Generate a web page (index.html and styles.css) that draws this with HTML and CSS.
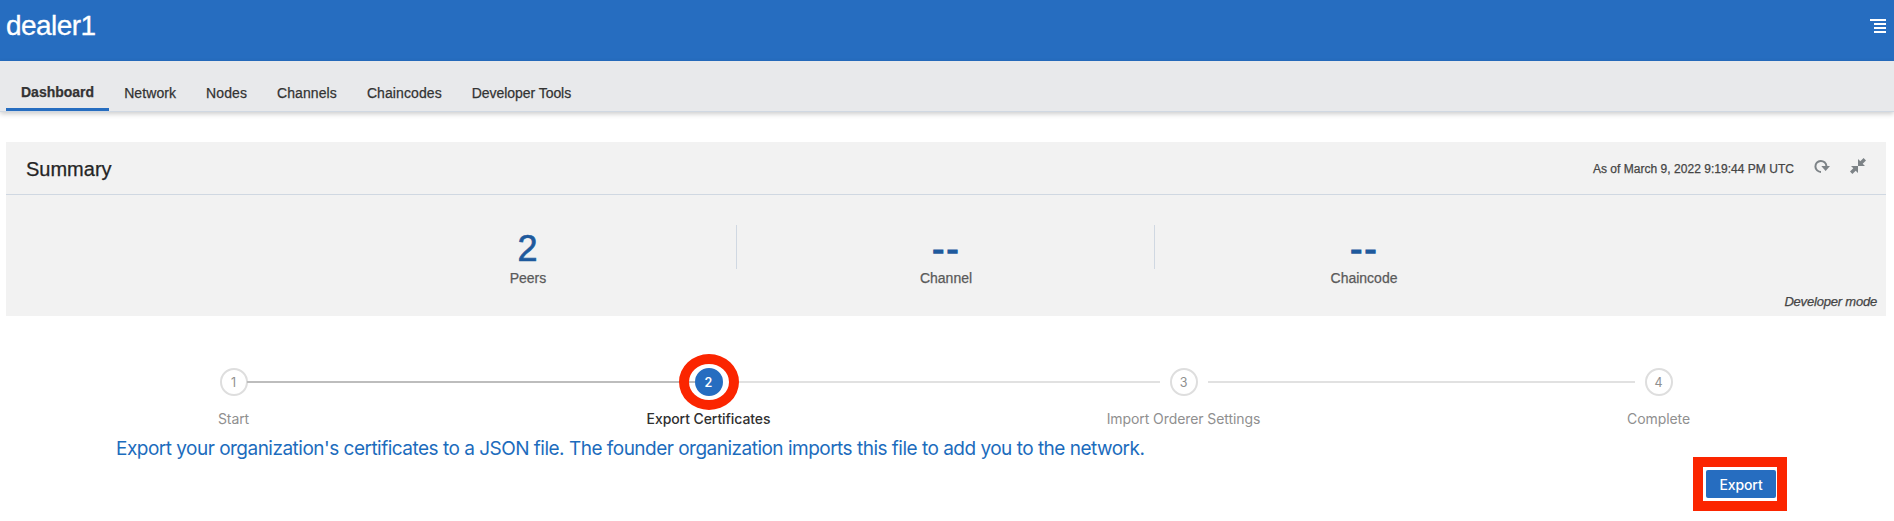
FILE: index.html
```html
<!DOCTYPE html>
<html lang="en">
<head>
<meta charset="utf-8">
<title>dealer1</title>
<link rel="stylesheet" href="styles.css">
</head>
<body>
<header class="header">
  <h1 class="brand">dealer1</h1>
  <svg class="menu-icon" width="16" height="14" viewBox="0 0 16 14"><path fill="#fff" d="M0 0h16v2H0zM4 4h12v2H4zM4 8h12v2H4zM4 12h12v2H4z"/></svg>
</header>
<nav class="tabs">
  <a class="tab active">Dashboard</a>
  <a class="tab">Network</a>
  <a class="tab">Nodes</a>
  <a class="tab">Channels</a>
  <a class="tab">Chaincodes</a>
  <a class="tab">Developer Tools</a>
</nav>
<main>
  <section class="panel">
    <div class="panel-head">
      <h2 class="panel-title">Summary</h2>
      <span class="asof">As of March 9, 2022 9:19:44 PM UTC</span>
      <svg class="refresh" width="16" height="16" viewBox="0 0 16 16"><path d="M7 12.9A5.5 5.5 0 1 1 12.4 7" fill="none" stroke="#7d8387" stroke-width="2"/><path d="M7.3 7h8.7l-4.4 5z" fill="#7d8387"/></svg>
      <svg class="collapse" width="16" height="16" viewBox="0 0 16 16"><path fill="#7d8387" d="M8 8V1l2.3 2.3L13.6 0 16 2.4l-3.3 3.3L15 8zM8 8v7l-2.3-2.3L2.4 16 0 13.6l3.3-3.3L1 8z"/></svg>
    </div>
    <div class="stats">
      <div class="stat"><div class="value">2</div><div class="label">Peers</div></div>
      <div class="stat"><div class="value dashes">--</div><div class="label">Channel</div></div>
      <div class="stat"><div class="value dashes">--</div><div class="label">Chaincode</div></div>
    </div>
    <div class="mode">Developer mode</div>
  </section>
  <div class="train">
    <div class="step"><span class="dot">1</span><span class="step-label">Start</span></div>
    <div class="step current"><span class="dot">2<i class="ring"></i></span><span class="step-label">Export Certificates</span></div>
    <div class="step"><span class="dot">3</span><span class="step-label">Import Orderer Settings</span></div>
    <div class="step"><span class="dot">4</span><span class="step-label">Complete</span></div>
  </div>
  <p class="hint">Export your organization's certificates to a JSON file. The founder organization imports this file to add you to the network.</p>
  <div class="actions"><div class="frame"><button class="export">Export</button></div></div>
</main>
</body>
</html>
```
FILE: styles.css
```css
* { box-sizing: border-box; }
body {
  margin: 0;
  height: 521px;
  overflow: hidden;
  background: #fff;
  color: #333;
  font: 14px "Liberation Sans", Arial, sans-serif;
}
h1, h2, p { margin: 0; font-weight: 400; }
svg { display: block; flex: none; }

.header {
  height: 61px;
  padding: 0 8px 0 6px;
  display: flex;
  justify-content: space-between;
  background: #266dc0;
}
.brand { color: #fff; font-size: 28px; line-height: 32px; padding-top: 10px; letter-spacing: -.55px; -webkit-text-stroke: .3px #fff; }
.menu-icon { margin-top: 19px; }

.tabs {
  height: 51px;
  padding-left: 6px;
  display: flex;
  background: #e8e9eb;
  border-bottom: 1px solid #d0d8e2;
  box-shadow: 0 2px 5px rgba(0, 0, 0, .2);
}
.tab { padding: 24px 15px 0; line-height: 16px; color: #333; letter-spacing: .09px; -webkit-text-stroke: .25px #333; }
.tab:last-child { letter-spacing: -.05px; }
.tab.active { padding-top: 23px; font-weight: 700; letter-spacing: 0; border-bottom: 3px solid #266dc0; }

.panel { margin: 30px 8px 0 6px; height: 174px; background: #f2f2f2; }
.panel-head {
  height: 53px;
  padding: 0 20px;
  display: flex;
  border-bottom: 1px solid #d0d8e2;
}
.panel-title { flex: 1; font-size: 20px; line-height: 24px; padding-top: 15px; color: #252525; -webkit-text-stroke: .25px #252525; }
.asof { font-size: 12px; line-height: 16px; padding-top: 19px; color: #454545; letter-spacing: .03px; -webkit-text-stroke: .25px #454545; }
.refresh { margin: 17px 0 0 20px; }
.collapse { margin: 16px 0 0 20px; }
.stats { height: 105px; display: flex; justify-content: center; }
.stat { width: 418px; padding-top: 34px; text-align: center; position: relative; }
.stat + .stat::before {
  content: "";
  position: absolute;
  left: -1px;
  top: 30px;
  height: 44px;
  border-left: 1px solid #d0d8e2;
}
.value { font-size: 36px; line-height: 40px; color: #1f5a9d; text-indent: -1px; -webkit-text-stroke: .7px #1f5a9d; }
.dashes { letter-spacing: 2.2px; text-indent: 1px; -webkit-text-stroke-width: 1.4px; }
.label { line-height: 16px; margin-top: 1px; color: #5a5a5a; -webkit-text-stroke: .25px #5a5a5a; }
.mode { margin-top: -6px; padding-right: 9px; text-align: right; font-size: 13px; line-height: 16px; font-style: italic; color: #454545; letter-spacing: -.2px; -webkit-text-stroke: .25px #454545; }

.train {
  display: flex;
  width: 1900px;
  margin: 52px 0 0 -4px;
  height: 64px;
  font-family: Inter, sans-serif;
  color: #8f8f8f;
}
.step { width: 475px; display: flex; flex-direction: column; align-items: center; position: relative; }
.dot {
  width: 28px;
  height: 28px;
  border: 2px solid #dedede;
  border-radius: 50%;
  font-size: 12.5px;
  line-height: 25px;
  text-align: center;
  background: #fff;
  position: relative;
}
.step + .step::before {
  content: "";
  position: absolute;
  left: -213px;
  top: 13px;
  width: 427px;
  height: 2px;
  background: #e1e1e1;
}
.step.current::before { left: -224px; width: 448px; background: #bdbdbd; }
.step-label { margin-top: 13px; line-height: 20px; letter-spacing: -.08px; white-space: nowrap; }
.current .dot { background: #266dc0; border-color: #266dc0; color: #fff; font-weight: 600; z-index: 1; }
.current .step-label { color: #303030; font-weight: 500; }
.ring {
  position: absolute;
  left: -18px;
  top: -16px;
  width: 60px;
  height: 56px;
  border: 10px solid #fb2500;
  border-radius: 50%;
}
.hint { padding: 4px 0 0 116px; height: 26px; font: 19px/26px Inter, sans-serif; letter-spacing: -.51px; color: #1c6cbd; white-space: nowrap; }
.actions { display: flex; justify-content: flex-end; padding-right: 107px; margin-top: -1px; }
.frame { width: 94px; height: 54px; border: 10px solid #fb2500; padding: 3px 1px 3px 3px; }
.export {
  display: block;
  width: 70px;
  height: 28px;
  padding: 1px 0 0;
  border: 0;
  border-radius: 2px;
  background: #266dc0;
  color: #fff;
  font: 500 14px/27px Inter, sans-serif;
  letter-spacing: -.1px;
}
```
